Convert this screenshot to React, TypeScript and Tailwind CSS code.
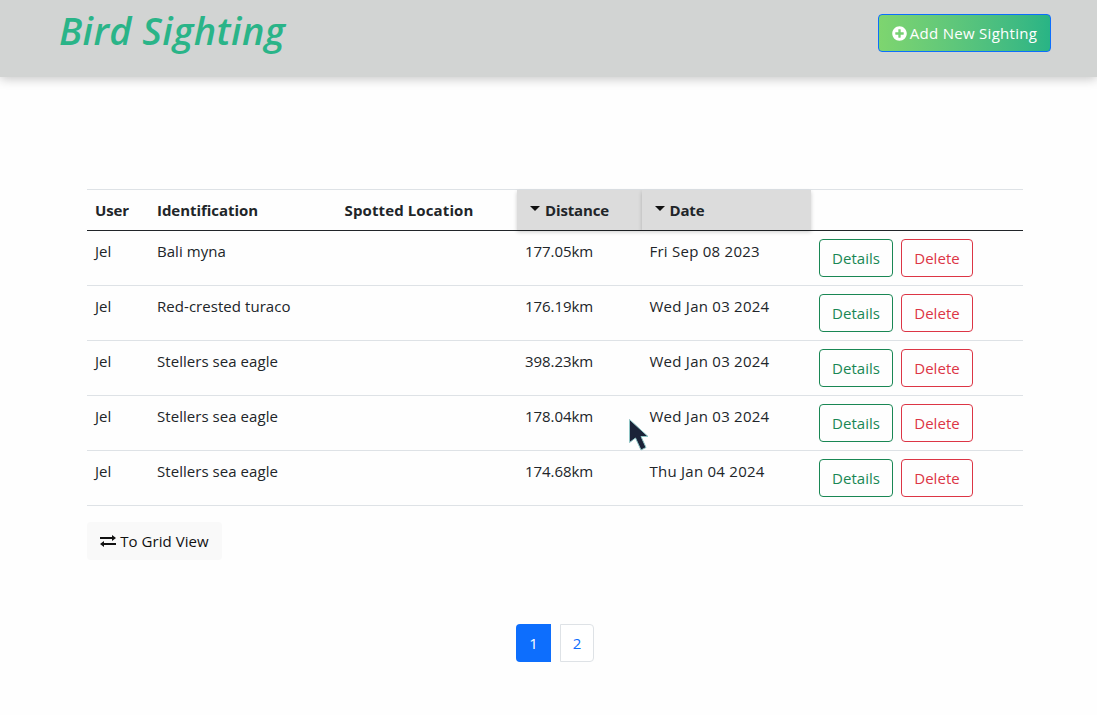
import React from "react";
import { FaPlusCircle } from "react-icons/fa";

const rows = [
  { user: "Jel", bird: "Bali myna", distance: "177.05km", date: "Fri Sep 08 2023" },
  { user: "Jel", bird: "Red-crested turaco", distance: "176.19km", date: "Wed Jan 03 2024" },
  { user: "Jel", bird: "Stellers sea eagle", distance: "398.23km", date: "Wed Jan 03 2024" },
  { user: "Jel", bird: "Stellers sea eagle", distance: "178.04km", date: "Wed Jan 03 2024" },
  { user: "Jel", bird: "Stellers sea eagle", distance: "174.68km", date: "Thu Jan 04 2024" },
];

const columns = "grid grid-cols-[62px_187.5px_180.5px_124.5px_169.5px_212px]";

function Caret() {
  return (
    <svg className="mr-[5px] mb-[7px] inline-block h-[5px] w-[10px]" viewBox="0 0 10 5">
      <path d="M0 0H10L5 5Z" fill="#111" />
    </svg>
  );
}

function ExchangeIcon() {
  return (
    <svg className="mt-px mr-1 h-[13px] w-4" viewBox="0 0 16 13" fill="#111">
      <path d="M0 2H12V0L16 3L12 6V4H0Z" />
      <path d="M16 8H4V6L0 9L4 12V10H16Z" />
    </svg>
  );
}

export default function App() {
  return (
    <div className="h-[715px] overflow-hidden bg-[#fefefe] font-['Open_Sans',sans-serif] text-[15px] leading-6 tracking-[0.05px] text-[#212529]">
      <header className="flex h-[77px] items-start justify-between bg-[#d2d4d3] pr-[46px] pl-[59px] shadow-[0_2px_10px_rgba(0,0,0,0.22)]">
        <h1 className="pt-[6px] text-[38px] leading-[48px] font-semibold tracking-[0.4px] text-[#2ab488] italic">Bird Sighting</h1>
        <button className="mt-[14px] flex h-[38px] w-[173px] items-center justify-center rounded border border-[#0d6efd] bg-linear-to-r from-[#7ed56f] to-[#28b485] tracking-[0.28px] whitespace-nowrap text-white">
          <FaPlusCircle className="mr-[3px] size-[15px]" />
          Add New Sighting
        </button>
      </header>

      <main className="flex flex-col items-start pt-[112px] pl-[87px]">
        <div className="w-[936px]">
          <div className={`${columns} h-[42px] border-t border-b border-t-[#dee2e6] border-b-[#212529] font-bold`}>
            <div className="px-2 py-2 tracking-[-0.1px]">User</div>
            <div className="px-2 py-2 tracking-[-0.05px]">Identification</div>
            <div className="px-2 py-2 tracking-[0.12px]">Spotted Location</div>
            <div className="bg-[#dcdcdc] py-2 pl-[13px] tracking-[-0.15px] shadow-[0_2px_4px_rgba(0,0,0,0.2)]"><Caret />Distance</div>
            <div className="bg-[#dcdcdc] py-2 pl-[13px] tracking-[-0.15px] shadow-[0_2px_4px_rgba(0,0,0,0.2)]"><Caret />Date</div>
            <div />
          </div>
          {rows.map((row, i) => (
            <div key={i} className={`${columns} h-[55px] border-b border-[#dee2e6]`}>
              <div className="p-2">{row.user}</div>
              <div className="p-2">{row.bird}</div>
              <div className="p-2" />
              <div className="p-2 tracking-[-0.05px]">{row.distance}</div>
              <div className="p-2 tracking-[0.25px]">{row.date}</div>
              <div className="flex gap-2 p-2">
                <button className="h-[38px] w-[74px] rounded border border-[#198754] text-[#198754]">Details</button>
                <button className="h-[38px] w-[72px] rounded border border-[#dc3545] text-[#dc3545]">Delete</button>
              </div>
            </div>
          ))}
        </div>
        <button className="mt-4 flex h-[38px] w-[135px] items-center justify-center rounded bg-[#f9f9f9] whitespace-nowrap text-[#111]">
          <ExchangeIcon />
          To Grid View
        </button>
        <nav className="mt-16 ml-[429px] flex gap-[9px]">
          <button className="h-[38px] w-[35px] rounded-l bg-[#0d6efd] text-white">1</button>
          <button className="h-[38px] w-[34px] rounded-r border border-[#dee2e6] bg-white text-[#0d6efd]">2</button>
        </nav>
      </main>

      <svg className="pointer-events-none absolute top-[418px] left-[628px] h-[34px] w-[21px]" viewBox="0 0 21 34">
        <path d="M1.5 1.5V24.5L7.5 20L13 32L18 29.5L13 18.5H20Z" fill="#1b2338" stroke="#8fc5c5" strokeWidth="1" />
      </svg>
    </div>
  );
}
